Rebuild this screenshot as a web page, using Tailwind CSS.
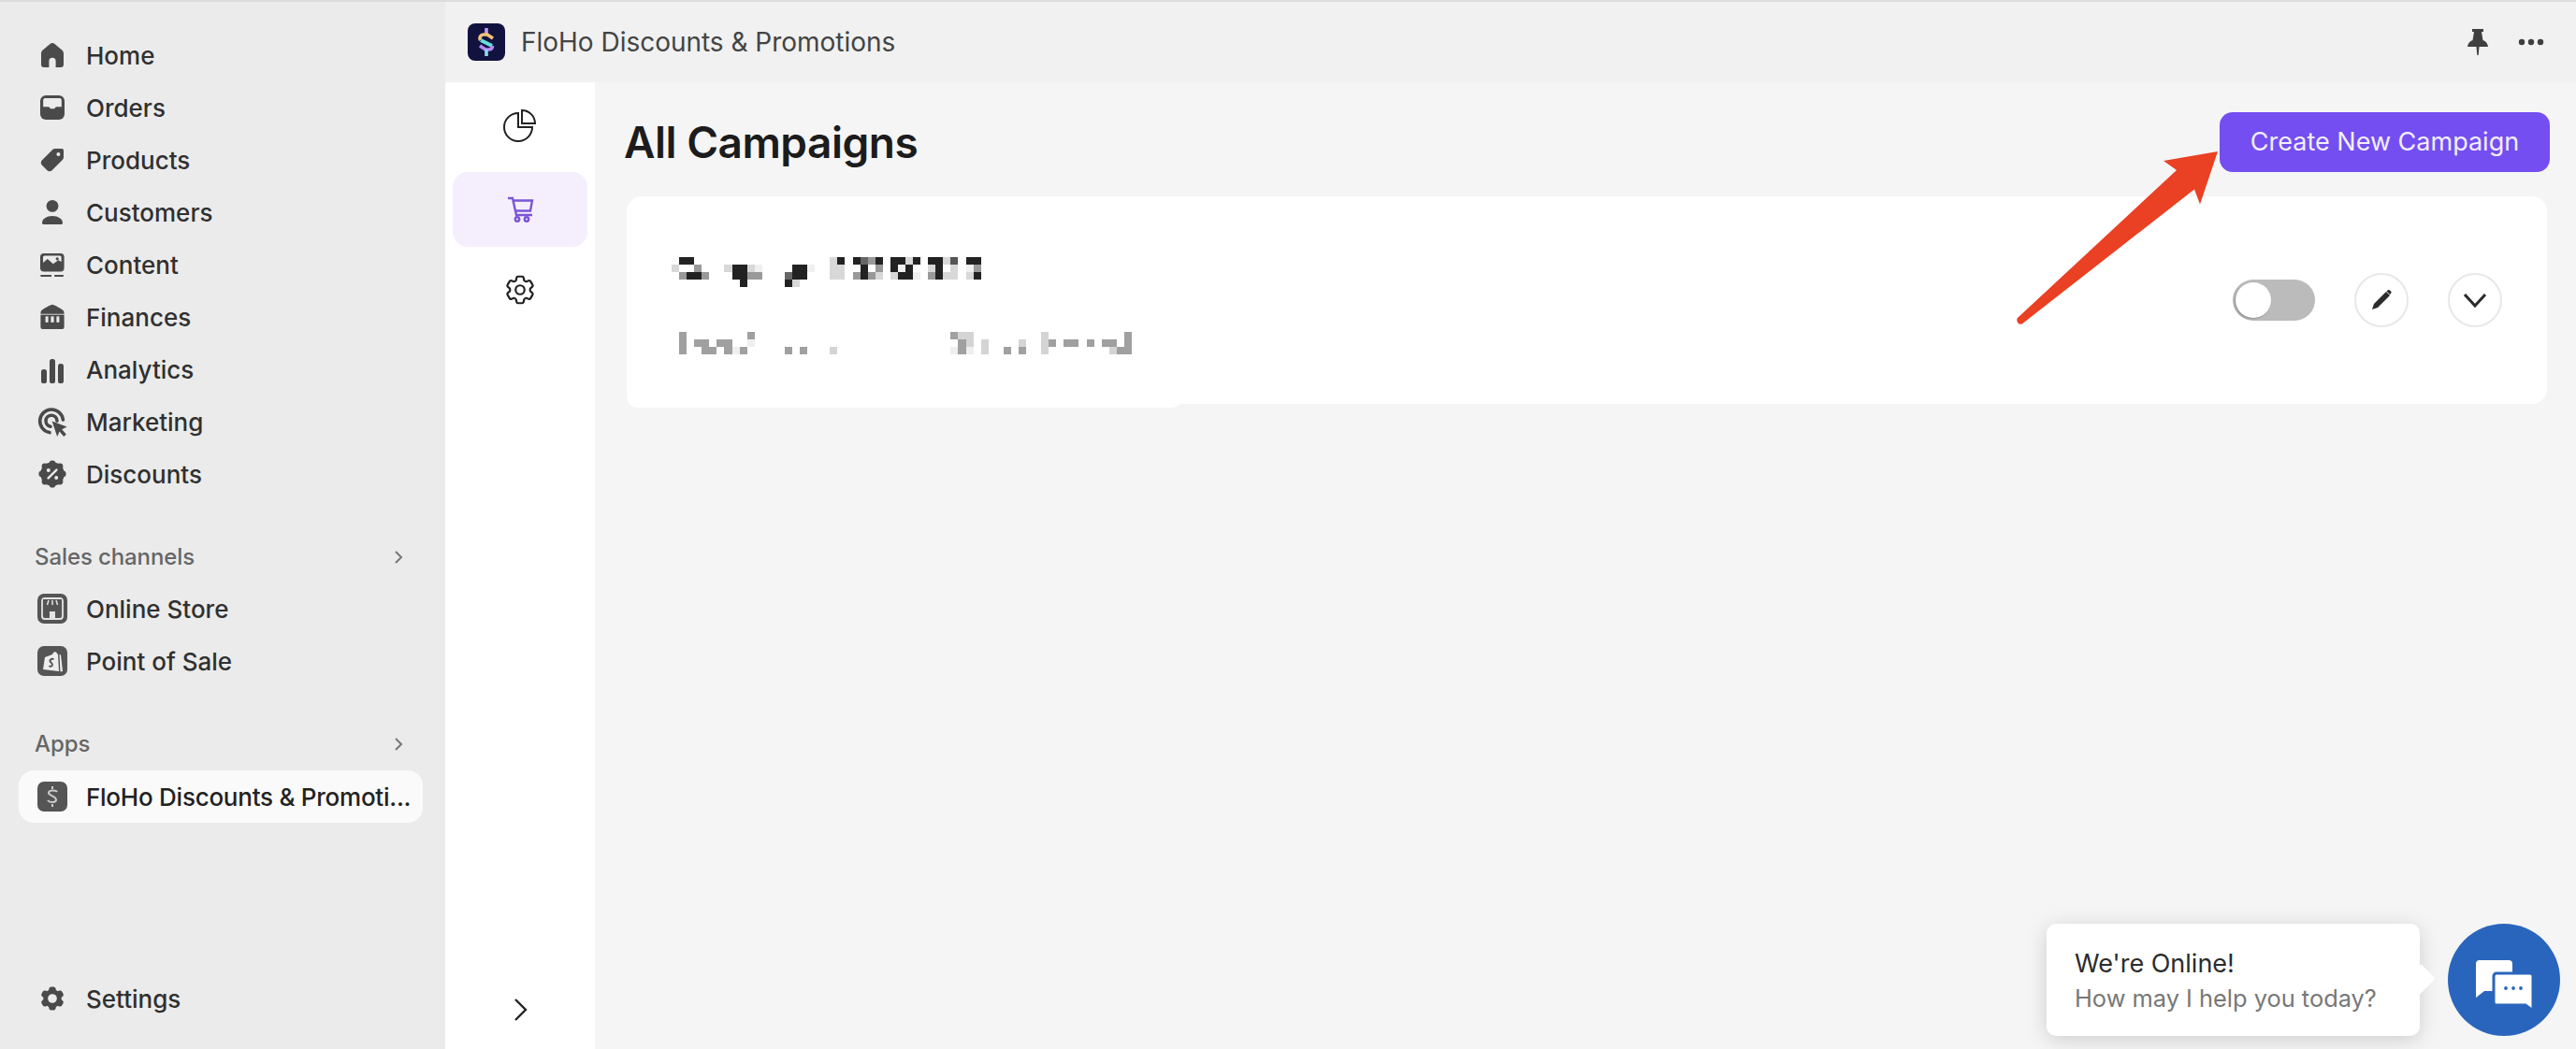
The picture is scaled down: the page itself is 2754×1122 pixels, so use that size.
<!DOCTYPE html>
<html lang="en">
<head>
  <meta charset="UTF-8" />
  <title>FloHo Discounts &amp; Promotions</title>
  <script src="https://cdn.jsdelivr.net/npm/@tailwindcss/browser@4"></script>
</head>
<body class="relative h-[1122px] w-[2754px] overflow-hidden bg-[#ebebeb] font-['Inter',sans-serif] text-[#333]">
  <div class="h-[2px] bg-[#dcdcdc]"></div>
  <div class="flex h-[1120px]">

    <!-- admin sidebar -->
    <aside class="flex w-[476px] shrink-0 flex-col bg-[#ebebeb] pb-[26px] pt-[29px] text-[26px] font-[450] text-[#303030]">
      <a class="flex h-[56px] items-center gap-[16px] pl-[36px]">
        <svg class="h-[40px] w-[40px]" viewBox="0 0 20 20" fill="#4a4a4a"><path d="M10 3.500c.4 0 .8.15 1.100.4l4 3.400c.6.5.9 1.200.9 2V15a1.500 1.500 0 0 1-1.500 1.500h-2.700v-3.300a1.800 1.800 0 0 0-3.600 0v3.300H5.500A1.500 1.500 0 0 1 4 15V9.300c0-.8.3-1.500.9-2l4-3.400c.3-.25.7-.4 1.100-.4z"/></svg>
        Home
      </a>
      <a class="flex h-[56px] items-center gap-[16px] pl-[36px]">
        <svg class="h-[40px] w-[40px]" viewBox="0 0 20 20" fill="#4a4a4a"><rect x="3.500" y="3.500" width="13" height="13" rx="3"/><path fill="#ebebeb" d="M5.100 6a1 1 0 0 1 1-1h7.800a1 1 0 0 1 1 1v3.600h-2.600c-.4 0-.6.2-.8.5l-.4.5H9l-.4-.5c-.2-.3-.4-.5-.8-.5H5.100z"/></svg>
        Orders
      </a>
      <a class="flex h-[56px] items-center gap-[16px] pl-[36px]">
        <svg class="h-[40px] w-[40px]" viewBox="0 0 20 20" fill="#4a4a4a"><path fill-rule="evenodd" d="M16 5v3.600c0 .5-.2 1-.6 1.400l-5.500 5.500c-.8.8-2 .8-2.800 0l-2.600-2.600c-.8-.8-.8-2 0-2.800L10 4.600c.4-.4.9-.6 1.400-.6H15c.6 0 1 .4 1 1zm-2.800 3a1 1 0 1 0 0-2 1 1 0 0 0 0 2z"/></svg>
        Products
      </a>
      <a class="flex h-[56px] items-center gap-[16px] pl-[36px]">
        <svg class="h-[40px] w-[40px]" viewBox="0 0 20 20" fill="#4a4a4a"><circle cx="10" cy="6.700" r="3.200"/><path d="M4.500 15.800c0-2.200 2.400-3.800 5.500-3.800s5.500 1.600 5.500 3.800c0 .4-.3.7-.7.7H5.200c-.4 0-.7-.3-.7-.7z"/></svg>
        Customers
      </a>
      <a class="flex h-[56px] items-center gap-[16px] pl-[36px]">
        <svg class="h-[40px] w-[40px]" viewBox="0 0 20 20" fill="#4a4a4a"><rect x="3.500" y="4" width="12.800" height="9.800" rx="2"/><path fill="#ebebeb" d="M5 6a.8.800 0 0 1 .8-.8h8.200a.8.800 0 0 1 .8.800v2.500l-1.600-.9-2.800 2-3-2.600L5 9z"/><circle cx="12.600" cy="6.900" r=".8" fill="#4a4a4a"/><rect x="3.600" y="15.500" width="6" height="1" rx=".4"/><rect x="11" y="15.500" width="5" height="1" rx=".4"/></svg>
        Content
      </a>
      <a class="flex h-[56px] items-center gap-[16px] pl-[36px]">
        <svg class="h-[40px] w-[40px]" viewBox="0 0 20 20" fill="#4a4a4a"><path d="M10 3.400c.5 0 5.500 2.400 6 3.400.2.500.3 1 .3 1.600H3.700c0-.6.100-1.100.3-1.600.5-1 5.500-3.400 6-3.400z"/><rect x="3.700" y="8.800" width="12.600" height="5"/><rect x="3.700" y="13" width="12.600" height="3.500" rx="1"/><rect x="6.300" y="9.700" width="1.500" height="3.200" fill="#ebebeb"/><rect x="9.200" y="9.700" width="1.600" height="3.200" fill="#ebebeb"/><rect x="12.200" y="9.700" width="1.500" height="3.200" fill="#ebebeb"/></svg>
        Finances
      </a>
      <a class="flex h-[56px] items-center gap-[16px] pl-[36px]">
        <svg class="h-[40px] w-[40px]" viewBox="0 0 20 20" fill="#4a4a4a"><rect x="4" y="10" width="3" height="7.500" rx="1.300"/><rect x="8.500" y="4.500" width="3" height="13" rx="1.300"/><rect x="13" y="7" width="3" height="10.500" rx="1.300"/></svg>
        Analytics
      </a>
      <a class="flex h-[56px] items-center gap-[16px] pl-[36px]">
        <svg class="h-[40px] w-[40px]" viewBox="0 0 20 20" fill="none"><path d="M8.500 15.800a6.200 6.200 0 1 1 7.200-6.800" stroke="#4a4a4a" stroke-width="1.800" stroke-linecap="round"/><path d="M9 12.600a3 3 0 1 1 3.500-3" stroke="#4a4a4a" stroke-width="1.800" stroke-linecap="round"/><path fill="#4a4a4a" d="M9.800 9.800l8 3-2.700 1.300 2.300 2.700-1.300 1.200-2.300-2.700-1.200 2.700z"/></svg>
        Marketing
      </a>
      <a class="flex h-[56px] items-center gap-[16px] pl-[36px]">
        <svg class="h-[40px] w-[40px]" viewBox="0 0 20 20" fill="#4a4a4a"><circle cx="10" cy="10" r="6.400"/><circle cx="10" cy="4.400" r="1.700"/><circle cx="10" cy="15.600" r="1.700"/><circle cx="4.400" cy="10" r="1.700"/><circle cx="15.600" cy="10" r="1.700"/><circle cx="6" cy="6" r="1.700"/><circle cx="14" cy="6" r="1.700"/><circle cx="6" cy="14" r="1.700"/><circle cx="14" cy="14" r="1.700"/><path d="M7.800 12.200l4.400-4.400" stroke="#ebebeb" stroke-width="1.200" stroke-linecap="round"/><circle cx="7.900" cy="8" r="1" fill="#ebebeb"/><circle cx="12.100" cy="12" r="1" fill="#ebebeb"/></svg>
        Discounts
      </a>

      <div class="mt-[32px] flex h-[56px] items-center justify-between pl-[37px] pr-[38px] pt-[1px] text-[24px] font-[550] tracking-[-0.1px] text-[#666]">
        Sales channels
        <svg class="h-[24px] w-[24px]" viewBox="0 0 24 24" fill="none" stroke="#777" stroke-width="2"><path d="M9 6l6 6-6 6"/></svg>
      </div>
      <a class="flex h-[56px] items-center gap-[16px] pl-[40px]">
        <svg class="mr-[4px] h-[32px] w-[32px]" viewBox="0 0 32 32"><rect width="32" height="32" rx="7" fill="#555"/><rect x="5" y="5" width="22" height="22" rx="3" fill="none" stroke="#e4e4e4" stroke-width="1.800"/><path d="M6 6h20v4a3 3 0 0 1-5 1 3.500 3.500 0 0 1-5 0 3.500 3.500 0 0 1-5 0 3 3 0 0 1-5-1z" fill="#555"/><path d="M12 7l-1.500 5M16 7v5M20 7l1.500 5" stroke="#e4e4e4" stroke-width="1.500"/><rect x="13" y="19" width="6" height="7" fill="#e4e4e4"/></svg>
        Online Store
      </a>
      <a class="flex h-[56px] items-center gap-[16px] pl-[40px]">
        <svg class="mr-[4px] h-[32px] w-[32px]" viewBox="0 0 32 32"><rect width="32" height="32" rx="7" fill="#555"/><path d="M8 12l8-3c.5-3 4-4 5-1l1 1 1 18-17-2z" fill="#eee"/><path d="M23.500 9l1.500.5 2 17.500-2.500.5z" fill="#eee"/><path d="M17.500 14c-2.800-.9-5 1-3.500 3 1.300 1.400 2.700 1.800 1.800 3.800-.6 1.200-2.300 1.200-3.400.5" fill="none" stroke="#555" stroke-width="1.900"/></svg>
        Point of Sale
      </a>

      <div class="mt-[32px] flex h-[56px] items-center justify-between pl-[37px] pr-[38px] pt-[1px] text-[24px] font-[550] tracking-[-0.1px] text-[#666]">
        Apps
        <svg class="h-[24px] w-[24px]" viewBox="0 0 24 24" fill="none" stroke="#777" stroke-width="2"><path d="M9 6l6 6-6 6"/></svg>
      </div>
      <a class="ml-[20px] mt-[1px] flex h-[56px] w-[432px] items-center rounded-[16px] bg-[#fafafa] pl-[20px] font-medium tracking-[-0.25px] text-[#222]">
        <svg class="mr-[20px] h-[32px] w-[32px] shrink-0" viewBox="0 0 32 32"><rect width="32" height="32" rx="7" fill="#555"/><path d="M21 11c-1-2-8-2.500-9 .5-1 3.500 8 3.500 8 8 0 3-7 3.500-9 .5" fill="none" stroke="#ccc" stroke-width="2"/><path d="M16 5v3M16 24v3" stroke="#ccc" stroke-width="2"/></svg>
        <span class="whitespace-nowrap">FloHo Discounts &amp; Promoti...</span>
      </a>

      <a class="mt-auto flex h-[56px] items-center gap-[16px] pl-[36px]">
        <svg class="h-[40px] w-[40px]" viewBox="-3.500 -3.500 31 31" fill="#4a4a4a"><path fill-rule="evenodd" d="M11.078 2.250c-.917 0-1.699.663-1.850 1.567L9.050 4.889c-.02.12-.115.26-.297.348a7.493 7.493 0 0 0-.986.57c-.166.115-.334.126-.45.083L6.300 5.508a1.875 1.875 0 0 0-2.282.819l-.922 1.597a1.875 1.875 0 0 0 .432 2.385l.84.692c.095.078.17.229.154.43a7.598 7.598 0 0 0 0 1.139c.015.2-.059.352-.153.43l-.841.692a1.875 1.875 0 0 0-.432 2.385l.922 1.597a1.875 1.875 0 0 0 2.282.818l1.019-.382c.115-.043.283-.031.45.082.312.214.641.405.985.57.182.088.277.228.297.35l.178 1.071c.151.904.933 1.567 1.850 1.567h1.844c.916 0 1.699-.663 1.850-1.567l.178-1.072c.02-.12.114-.26.297-.349.344-.165.673-.356.985-.57.167-.114.335-.125.45-.082l1.020.382a1.875 1.875 0 0 0 2.280-.819l.923-1.597a1.875 1.875 0 0 0-.432-2.385l-.84-.692c-.095-.078-.17-.229-.154-.43a7.614 7.614 0 0 0 0-1.139c-.016-.2.059-.352.153-.43l.84-.692c.708-.582.891-1.590.433-2.385l-.922-1.597a1.875 1.875 0 0 0-2.282-.818l-1.020.382c-.114.043-.282.031-.449-.083a7.490 7.490 0 0 0-.985-.57c-.183-.087-.277-.227-.297-.348l-.179-1.072a1.875 1.875 0 0 0-1.850-1.567h-1.843ZM12 15.750a3.750 3.750 0 1 0 0-7.500 3.750 3.750 0 0 0 0 7.500Z"/></svg>
        Settings
      </a>
    </aside>

    <div class="flex min-w-0 flex-1 flex-col">
      <!-- app title bar -->
      <header class="flex h-[86px] shrink-0 items-center justify-between bg-[#f1f1f1] pl-[24px] pr-[34px]">
        <div class="flex items-center gap-[17px]">
          <svg class="h-[40px] w-[40px]" viewBox="0 0 40 40" fill="none" stroke-width="3.600"><rect width="40" height="40" rx="8" fill="#12123f" stroke="none"/><path d="M20 5v7" stroke="#c39af5"/><path d="M27 16l-6-4h-4a4 4 0 0 0-3.500 6" stroke="#f3c27a"/><path d="M14 18l12 6" stroke="#63e0d8" stroke-width="3.800"/><path d="M26.500 24a4 4 0 0 1-3.500 4h-4l-6-4" stroke="#b58af2"/><path d="M20 28v7" stroke="#8fd8f0"/></svg>
          <span class="text-[28px] tracking-[-0.02px] text-[#444]">FloHo Discounts &amp; Promotions</span>
        </div>
        <div class="flex items-center gap-[32px]">
          <svg class="h-[28px] w-[22px]" viewBox="0 0 22 28" fill="#3f3f3f"><path d="M5 0h12v3h-2l1.500 9c3 1 5 3.500 5.500 7H0c.5-3.500 2.500-6 5.500-7L7 3H5z"/><path d="M9.500 19h3l-.8 9h-1.400z"/></svg>
          <svg class="h-[8px] w-[28px]" viewBox="0 0 28 8" fill="#3f3f3f"><circle cx="4" cy="4" r="3.200"/><circle cx="14" cy="4" r="3.200"/><circle cx="24" cy="4" r="3.200"/></svg>
        </div>
      </header>

      <div class="flex min-h-0 flex-1">
        <!-- app rail -->
        <nav class="flex w-[160px] shrink-0 flex-col items-center bg-white">
          <div class="flex h-[96px] w-full items-center justify-center pb-[4px]">
            <svg class="h-[36px] w-[36px]" viewBox="0 0 36 36" fill="none" stroke="#222" stroke-width="2"><path d="M16 5a15 15 0 1 0 15 15H16z"/><path d="M20 2a14 14 0 0 1 14 14H20z"/></svg>
          </div>
          <div class="-ml-[1px] flex h-[80px] w-[144px] items-center justify-center rounded-[16px] bg-[#f5effd]">
            <svg class="h-[28px] w-[30px]" viewBox="0 0 30 28" fill="none" stroke="#7a56d6" stroke-width="2.400"><path d="M2 2h5l4 18h17"/><path d="M7 4.500h21l-2 11H9"/><circle cx="12" cy="24.500" r="2.200"/><circle cx="22" cy="24.500" r="2.200"/></svg>
          </div>
          <div class="flex h-[96px] w-full items-center justify-center pb-[4px]">
            <svg class="h-[38px] w-[38px]" viewBox="0 0 24 24" fill="none" stroke="#222" stroke-width="1.400" stroke-linejoin="round"><path d="M9.594 3.940c.09-.542.56-.94 1.110-.94h2.593c.55 0 1.020.398 1.110.94l.213 1.281c.063.374.313.686.645.87.074.04.147.083.22.127.325.196.72.257 1.075.124l1.217-.456a1.125 1.125 0 0 1 1.370.49l1.296 2.247a1.125 1.125 0 0 1-.26 1.431l-1.003.827c-.293.241-.438.613-.43.992a7.723 7.723 0 0 1 0 .255c-.008.378.137.75.43.991l1.004.827c.424.35.534.955.26 1.430l-1.298 2.247a1.125 1.125 0 0 1-1.369.491l-1.217-.456c-.355-.133-.75-.072-1.076.124a6.470 6.470 0 0 1-.22.128c-.331.183-.581.495-.644.869l-.213 1.281c-.09.543-.56.94-1.110.94h-2.594c-.55 0-1.019-.398-1.110-.94l-.213-1.281c-.062-.374-.312-.686-.644-.87a6.520 6.520 0 0 1-.22-.127c-.325-.196-.72-.257-1.076-.124l-1.217.456a1.125 1.125 0 0 1-1.369-.49l-1.297-2.247a1.125 1.125 0 0 1 .26-1.431l1.004-.827c.292-.24.437-.613.43-.991a6.932 6.932 0 0 1 0-.255c.007-.38-.138-.751-.43-.992l-1.004-.827a1.125 1.125 0 0 1-.26-1.430l1.297-2.247a1.125 1.125 0 0 1 1.370-.491l1.216.456c.356.133.751.072 1.076-.124.072-.044.146-.086.22-.128.332-.183.582-.495.644-.869l.214-1.280Z"/><circle cx="12" cy="12" r="3"/></svg>
          </div>
          <svg class="mb-[29px] mt-auto h-[26px] w-[26px]" viewBox="0 0 26 26" fill="none" stroke="#222" stroke-width="2.400"><path d="M8 2l11 11L8 24"/></svg>
        </nav>

        <!-- page content -->
        <main class="flex-1 bg-[#f5f5f5] pl-[34px] pr-[28px] pt-[32px]">
          <div class="flex h-[64px] items-center justify-between">
            <h1 class="-ml-[3px] text-[46px] font-semibold tracking-[-0.5px] text-[#1c1c1c]">All Campaigns</h1>
            <button class="flex h-[64px] w-[353px] items-center justify-center rounded-[14px] bg-[#744ef0] text-[27px] text-[#f3eefe]">Create New Campaign</button>
          </div>
          <section class="relative mt-[26px] flex h-[222px] w-[2053px] justify-between rounded-[16px] bg-white pl-[48px] pr-[48px] pt-[65px]">
            <!-- the blur patch in the screenshot runs a little below the card on the left -->
            <div class="absolute -bottom-[4px] left-0 h-[14px] w-[594px] rounded-b-[12px] bg-white"></div>
            <!-- mosaic that hides the campaign name -->
            <svg class="relative h-[104px] w-[500px]" viewBox="0 0 62 13" preserveAspectRatio="none" shape-rendering="crispEdges">
              <g fill="#222"><rect x="1" y="0" width="2" height="1"/><rect x="22" y="0" width="1" height="1"/><rect x="24" y="0" width="1" height="1"/><rect x="27" y="0" width="1" height="1"/><rect x="29" y="0" width="2" height="1"/><rect x="32" y="0" width="1" height="1"/><rect x="34" y="0" width="2" height="1"/><rect x="37" y="0" width="1" height="1"/><rect x="39" y="0" width="2" height="1"/><rect x="8" y="1" width="2" height="1"/><rect x="16" y="1" width="2" height="1"/><rect x="25" y="1" width="1" height="1"/><rect x="29" y="1" width="1" height="1"/><rect x="31" y="1" width="1" height="1"/><rect x="35" y="1" width="1" height="1"/><rect x="2" y="2" width="2" height="1"/><rect x="8" y="2" width="2" height="1"/><rect x="16" y="2" width="2" height="1"/><rect x="25" y="2" width="1" height="1"/><rect x="30" y="2" width="2" height="1"/><rect x="35" y="2" width="1" height="1"/><rect x="40" y="2" width="1" height="1"/><rect x="9" y="3" width="1" height="1"/><rect x="15" y="3" width="1" height="1"/></g>
              <g fill="#666"><rect x="25" y="0" width="1" height="1"/><rect x="15" y="2" width="1" height="1"/><rect x="37" y="0" width="1" height="1" fill="#555"/></g>
              <g fill="#999"><rect x="10" y="2" width="2" height="1"/><rect x="24" y="2" width="1" height="1"/><rect x="26" y="2" width="1" height="1"/><rect x="3" y="1" width="1" height="1"/><rect x="27" y="1" width="1" height="1"/><rect x="34" y="2" width="1" height="1"/><rect x="26" y="0" width="1" height="1"/><rect x="1" y="2" width="1" height="1"/><rect x="4" y="2" width="1" height="1"/><rect x="40" y="1" width="1" height="1"/></g>
              <g fill="#d8d8d8"><rect x="21" y="0" width="1" height="1"/><rect x="31" y="0" width="1" height="1"/><rect x="36" y="0" width="1" height="1"/><rect x="0" y="1" width="1" height="1"/><rect x="7" y="1" width="1" height="1"/><rect x="10" y="1" width="1" height="1"/><rect x="21" y="1" width="2" height="1"/><rect x="34" y="1" width="1" height="1"/><rect x="37" y="1" width="1" height="1"/><rect x="21" y="2" width="2" height="1"/><rect x="27" y="2" width="1" height="1"/><rect x="29" y="2" width="1" height="1"/><rect x="36" y="2" width="2" height="1"/><rect x="39" y="2" width="1" height="1"/><rect x="16" y="3" width="1" height="1"/></g>
              <g fill="#f0f0f0"><rect x="11" y="1" width="1" height="1"/><rect x="18" y="1" width="1" height="1"/><rect x="30" y="1" width="1" height="1"/><rect x="39" y="1" width="1" height="1"/><rect x="32" y="2" width="1" height="1"/></g>
              <g fill="#a0a0a0"><rect x="1" y="10" width="1" height="3"/><rect x="10" y="10" width="1" height="1"/><rect x="37" y="10" width="1" height="1"/><rect x="60" y="10" width="1" height="3"/><rect x="3" y="11" width="2" height="1"/><rect x="6" y="11" width="2" height="1"/><rect x="38" y="11" width="1" height="2"/><rect x="50" y="11" width="1" height="1"/><rect x="52" y="11" width="2" height="1"/><rect x="55" y="11" width="1" height="1"/><rect x="57" y="11" width="2" height="1"/><rect x="4" y="12" width="2" height="1"/><rect x="7" y="12" width="1" height="1"/><rect x="9" y="12" width="1" height="1"/><rect x="15" y="12" width="1" height="1"/><rect x="17" y="12" width="1" height="1"/><rect x="44" y="12" width="1" height="1"/><rect x="46" y="12" width="1" height="1"/><rect x="59" y="12" width="1" height="1"/></g>
              <g fill="#d4d4d4"><rect x="38" y="10" width="2" height="1"/><rect x="39" y="11" width="1" height="1"/><rect x="41" y="11" width="1" height="2"/><rect x="46" y="11" width="1" height="1"/><rect x="49" y="10" width="1" height="3"/><rect x="21" y="12" width="1" height="1"/><rect x="58" y="12" width="1" height="1"/></g>
              <g fill="#efefef"><rect x="10" y="11" width="1" height="1"/><rect x="8" y="12" width="1" height="1"/><rect x="37" y="12" width="1" height="1"/><rect x="39" y="12" width="1" height="1"/></g>
            </svg>
            <div class="mt-[17px] flex h-[58px] items-center">
              <div class="relative mr-[42px] h-[44px] w-[88px] rounded-full bg-[#bbbbbb]">
                <div class="absolute left-[3px] top-[3px] h-[38px] w-[38px] rounded-full bg-white shadow-[-1px_1px_2px_rgba(0,0,0,0.25)]"></div>
              </div>
              <button class="flex h-[58px] w-[58px] items-center justify-center rounded-full border-2 border-[#e8e8e8] bg-white">
                <svg class="h-[28px] w-[28px]" viewBox="0 0 28 28" fill="#2b2b2b"><path d="M19 5l4 4-13 13-6 2 2-6z"/><path d="M20.500 3.500c.7-.7 1.800-.7 2.500 0l1 1c.7.7.7 1.800 0 2.500l-1 1-3.500-3.500z"/></svg>
              </button>
              <button class="ml-[42px] flex h-[58px] w-[58px] items-center justify-center rounded-full border-2 border-[#e8e8e8] bg-white">
                <svg class="h-[28px] w-[28px]" viewBox="0 0 28 28" fill="none" stroke="#2b2b2b" stroke-width="3"><path d="M3 8l11 12L25 8"/></svg>
              </button>
            </div>
          </section>
        </main>
      </div>
    </div>
  </div>

  <!-- red annotation arrow over the page -->
  <svg class="absolute left-[2150px] top-[155px] h-[200px] w-[230px]" viewBox="2150 155 230 200" fill="#ea4023"><path d="M2371 162l-58 10 14 10-170 158c-1.500 2-.5 4.500 1 6 1.500 1 3.500 1 5-.5l183-143 6 16z"/></svg>

  <!-- chat widget -->
  <div class="absolute left-[2188px] top-[988px] flex h-[120px] w-[399px] flex-col justify-center rounded-[10px] bg-white pl-[30px] pt-[2px] shadow-[0_4px_22px_rgba(0,0,0,0.16)]">
    <div class="mt-[1px] text-[27px] leading-[38px] text-[#2c2c2c]">We're Online!</div>
    <div class="-mt-[1px] text-[25.400px] leading-[38px] text-[#777]">How may I help you today?</div>
    <div class="absolute -right-[11px] top-[47px] h-[26px] w-[22px] rotate-45 rounded-[3px] bg-white"></div>
  </div>
  <div class="absolute left-[2617px] top-[988px] flex h-[120px] w-[120px] items-center justify-center rounded-full bg-[#2a65bd]">
    <svg class="mt-[10px] h-[64px] w-[64px]" viewBox="0 0 64 64"><path d="M2 10a4 4 0 0 1 4-4h31a4 4 0 0 1 4 4v29H11l-9 7z" fill="#fff"/><path d="M21 23a3 3 0 0 1 3-3h36a3 3 0 0 1 3 3v37l-8-6H24a3 3 0 0 1-3-3z" fill="#fff" stroke="#2a65bd" stroke-width="3"/><circle cx="34" cy="36" r="1.900" fill="#2a65bd"/><circle cx="42" cy="36" r="1.900" fill="#2a65bd"/><circle cx="50" cy="36" r="1.900" fill="#2a65bd"/></svg>
  </div>
</body>
</html>
